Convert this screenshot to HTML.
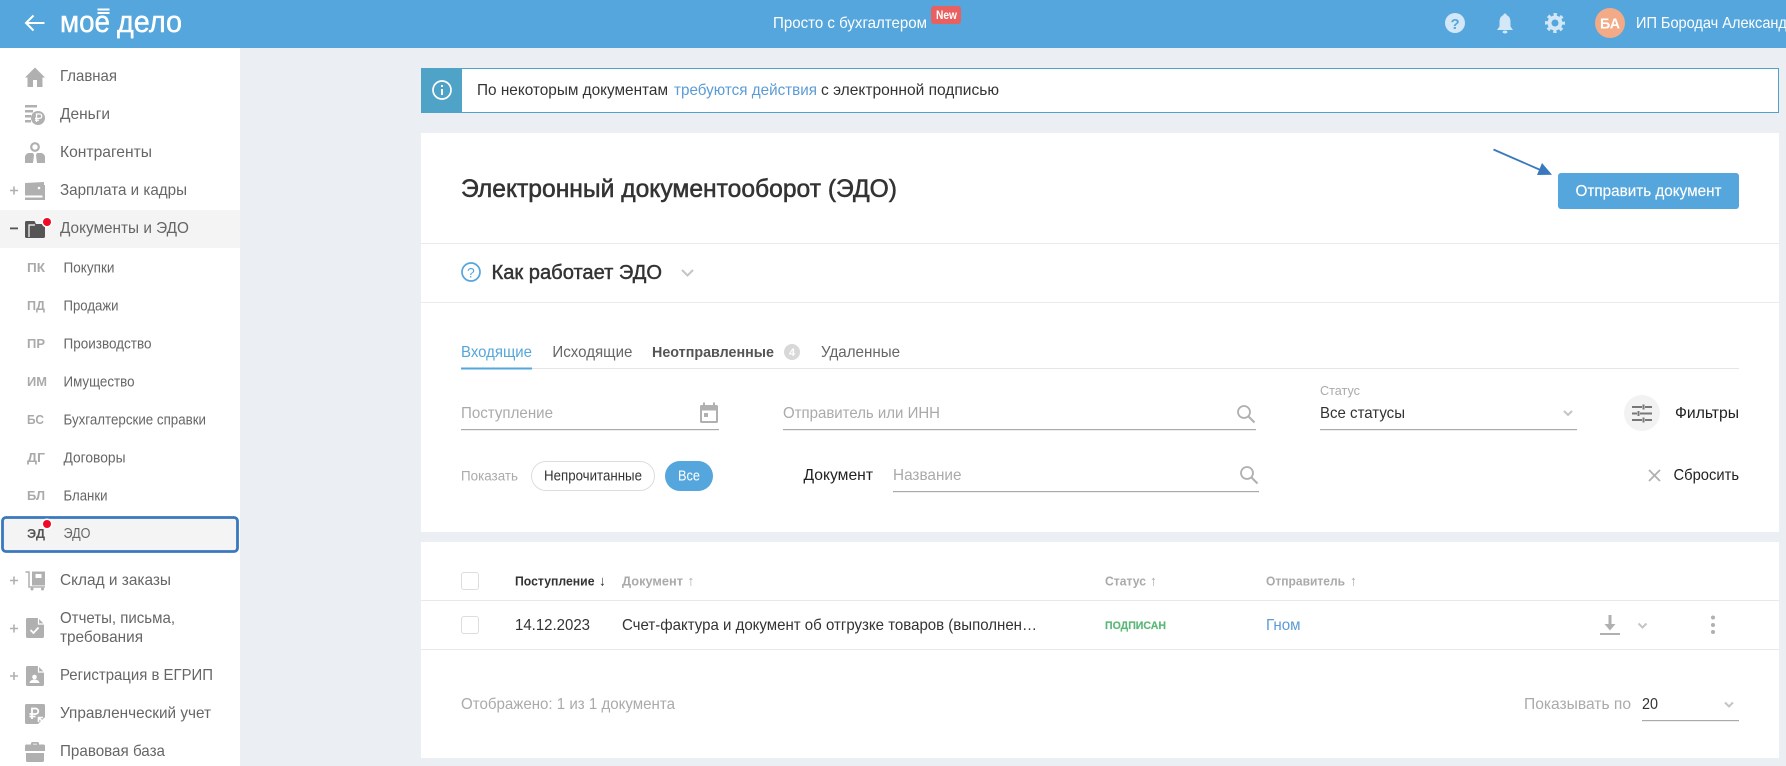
<!DOCTYPE html>
<html lang="ru">
<head>
<meta charset="utf-8">
<title>Электронный документооборот (ЭДО)</title>
<style>
html,body{margin:0;padding:0;width:1786px;height:766px;overflow:hidden;background:#ebeff3}
svg{display:block}
text{font-family:"Liberation Sans",Arial,sans-serif;white-space:pre}
.nav{font-size:16px;fill:#666}
.sub{font-size:14.5px;fill:#666}
.lab{font-size:12.5px;font-weight:700;fill:#aaa}
.t{font-size:16px;fill:#333}
.ph{font-size:16px;fill:#aaa}
.th{font-size:13px;font-weight:700;fill:#aaa}
.ar{font-size:14px;font-weight:700;fill:#aaa}
.ic{fill:#b0b0b0}
.wh{fill:#fff}
.chev{fill:none;stroke:#c4c4c4;stroke-width:2}
.ul{fill:#aaa}
.ln{fill:#e8e8e8}
</style>
</head>
<body>
<svg width="1786" height="766" viewBox="0 0 1786 766" xmlns="http://www.w3.org/2000/svg">
<rect width="1786" height="766" fill="#ebeff3"/>

<!-- top bar -->
<rect width="1786" height="48" fill="#54a6dc"/>
<path d="M44.5 23H26.5M33.5 15.500L26 23l7.500 7.500" fill="none" stroke="#fff" stroke-width="2"/>
<text x="60" y="32" font-size="31" fill="#fff" stroke="#fff" stroke-width=".45" textLength="50" lengthAdjust="spacingAndGlyphs">мое</text>
<text x="117" y="32" font-size="31" fill="#fff" stroke="#fff" stroke-width=".45" textLength="65" lengthAdjust="spacingAndGlyphs">дело</text>
<rect x="97.500" y="8.500" width="12" height="2" fill="#fff"/><rect x="97.500" y="12" width="12" height="2" fill="#fff"/>
<text x="773" y="28" font-size="16" fill="#fff" textLength="154" lengthAdjust="spacingAndGlyphs">Просто с бухгалтером</text>
<rect x="931" y="6" width="30" height="18" rx="3" fill="#e96060"/>
<text x="936" y="19" font-size="12" font-weight="700" fill="#fff" textLength="21" lengthAdjust="spacingAndGlyphs">New</text>
<circle cx="1455" cy="23" r="10" fill="#d2e7f7"/>
<text x="1450.500" y="29" font-size="15" font-weight="700" fill="#54a6dc">?</text>
<path d="M1505 13.500c-1 0-1.500.6-1.500 1.500-3.500 1.400-4 4.500-4 7.500v4l-2.500 3.500h16l-2.500-3.500v-4c0-3-.5-6.100-4-7.500 0-.9-.5-1.500-1.500-1.500z" fill="#d2e7f7"/>
<ellipse cx="1505" cy="32" rx="2.500" ry="1.500" fill="#d2e7f7"/>
<circle cx="1555" cy="23" r="5.500" fill="none" stroke="#d2e7f7" stroke-width="4"/>
<circle cx="1555" cy="23" r="8.500" fill="none" stroke="#d2e7f7" stroke-width="3" stroke-dasharray="3.340 3.340" stroke-dashoffset="1.670"/>
<circle cx="1610" cy="23" r="15" fill="#f2ab86"/>
<text x="1600" y="28.500" font-size="15" font-weight="700" fill="#fff" textLength="20" lengthAdjust="spacingAndGlyphs">БА</text>
<text x="1636" y="28" font-size="16" fill="#fff" textLength="159" lengthAdjust="spacingAndGlyphs">ИП Бородач Александр</text>

<!-- sidebar -->
<rect y="48" width="240" height="718" fill="#fff"/>
<rect y="210" width="240" height="38" fill="#f4f4f4"/>
<rect x="2.500" y="517.500" width="235" height="34" rx="3.500" fill="#f4f4f4" stroke="#3a78bd" stroke-width="2.800"/>

<text class="nav" x="60" y="81" textLength="57" lengthAdjust="spacingAndGlyphs">Главная</text>
<text class="nav" x="60" y="119" textLength="50" lengthAdjust="spacingAndGlyphs">Деньги</text>
<text class="nav" x="60" y="157" textLength="92" lengthAdjust="spacingAndGlyphs">Контрагенты</text>
<text class="nav" x="60" y="195" textLength="127" lengthAdjust="spacingAndGlyphs">Зарплата и кадры</text>
<text class="nav" x="60" y="233" textLength="129" lengthAdjust="spacingAndGlyphs">Документы и ЭДО</text>

<text class="lab" x="27" y="272" textLength="18" lengthAdjust="spacingAndGlyphs">ПК</text>
<text class="sub" x="63.500" y="272.500" textLength="51" lengthAdjust="spacingAndGlyphs">Покупки</text>
<text class="lab" x="27" y="310" textLength="18" lengthAdjust="spacingAndGlyphs">ПД</text>
<text class="sub" x="63.500" y="310.500" textLength="55" lengthAdjust="spacingAndGlyphs">Продажи</text>
<text class="lab" x="27" y="348" textLength="18" lengthAdjust="spacingAndGlyphs">ПР</text>
<text class="sub" x="63.500" y="348.500" textLength="88" lengthAdjust="spacingAndGlyphs">Производство</text>
<text class="lab" x="27" y="386" textLength="20" lengthAdjust="spacingAndGlyphs">ИМ</text>
<text class="sub" x="63.500" y="386.500" textLength="71" lengthAdjust="spacingAndGlyphs">Имущество</text>
<text class="lab" x="27" y="424" textLength="17" lengthAdjust="spacingAndGlyphs">БС</text>
<text class="sub" x="63.500" y="424.500" textLength="142.500" lengthAdjust="spacingAndGlyphs">Бухгалтерские справки</text>
<text class="lab" x="27" y="462" textLength="18" lengthAdjust="spacingAndGlyphs">ДГ</text>
<text class="sub" x="63.500" y="462.500" textLength="62" lengthAdjust="spacingAndGlyphs">Договоры</text>
<text class="lab" x="27" y="500" textLength="18" lengthAdjust="spacingAndGlyphs">БЛ</text>
<text class="sub" x="63.500" y="500.500" textLength="44" lengthAdjust="spacingAndGlyphs">Бланки</text>
<text class="lab" x="27" y="538" style="fill:#555" textLength="18" lengthAdjust="spacingAndGlyphs">ЭД</text>
<text class="sub" x="63.500" y="538" textLength="27" lengthAdjust="spacingAndGlyphs">ЭДО</text>

<text class="nav" x="60" y="585" textLength="111" lengthAdjust="spacingAndGlyphs">Склад и заказы</text>
<text class="nav" x="60" y="623" textLength="115" lengthAdjust="spacingAndGlyphs">Отчеты, письма,</text>
<text class="nav" x="60" y="642" textLength="83" lengthAdjust="spacingAndGlyphs">требования</text>
<text class="nav" x="60" y="680" textLength="153" lengthAdjust="spacingAndGlyphs">Регистрация в ЕГРИП</text>
<text class="nav" x="60" y="718" textLength="151" lengthAdjust="spacingAndGlyphs">Управленческий учет</text>
<text class="nav" x="60" y="756" textLength="105" lengthAdjust="spacingAndGlyphs">Правовая база</text>

<!-- plus / minus -->
<path d="M10 190.500h8M14 186.500v8M10 580.500h8M14 576.500v8M10 628.500h8M14 624.500v8M10 676h8M14 672v8" stroke="#b0b0b0" stroke-width="1.600" fill="none"/>
<rect x="10" y="227.500" width="8" height="1.800" fill="#555"/>

<!-- nav icons -->
<path class="ic" d="M35 67.500L25 77.500h2.500V87h5.500v-7h4v7h5.500v-9.500H45z"/>
<path class="ic" d="M25 105h12v2.500H25zM25 110h8v2.500h-8zM25 115h6v2.500h-6zM25 120h6v2.500h-6z"/>
<circle class="ic" cx="38" cy="118" r="7"/>
<path d="M36.500 122v-8h3a2.200 2.200 0 0 1 0 4.400h-4.500M35 120.200h4" fill="none" stroke="#fff" stroke-width="1.300"/>
<circle cx="35" cy="147" r="3.800" fill="none" stroke="#b0b0b0" stroke-width="2.200"/>
<path class="ic" d="M29 153h4l1 2-1 8h-8v-6c0-2 2-4 4-4zM41 153h-4l-1 2 1 8h8v-6c0-2-2-4-4-4z"/>
<path class="ic" d="M25 183l19-1v13.500H25z"/><rect x="25" y="197.500" width="20" height="2.500" class="ic"/><rect x="42.500" y="185" width="2.500" height="15" class="ic"/>
<circle cx="39" cy="188" r="1.300" fill="#fff"/>
<path fill="#555" d="M25 222.500c0-1 .6-1.500 1.500-1.500h8l1.500 3h9v12.500c0 1-.6 1.500-1.500 1.500h-17c-1 0-1.500-.5-1.500-1.500z"/>
<path d="M29 237v-12h6" fill="none" stroke="#fff" stroke-width="1.200"/>
<circle cx="47" cy="222" r="5.500" fill="#fff"/><circle cx="47" cy="222" r="4" fill="#ef0a26"/>
<circle cx="47" cy="524" r="5.500" fill="#fff"/><circle cx="47" cy="524" r="4" fill="#ef0a26"/>
<path d="M25.500 572h3.500v15h16" fill="none" stroke="#b0b0b0" stroke-width="1.500"/>
<rect x="32" y="571.500" width="13" height="14" class="ic"/><rect x="35.500" y="574" width="6" height="4" fill="#fff"/>
<circle cx="32" cy="589" r="1.500" class="ic"/><circle cx="42.500" cy="589" r="1.500" class="ic"/>
<path class="ic" d="M27.500 618h10.500l6 6v12.500c0 1-.6 1.500-1.500 1.500h-15c-1 0-1.500-.5-1.500-1.500v-17c0-1 .5-1.500 1.500-1.500z"/>
<path d="M38.500 617.500v6.500h6" fill="none" stroke="#fff" stroke-width="1.200"/>
<path d="M30.500 630l3 3 5-5.500" fill="none" stroke="#fff" stroke-width="1.800"/>
<path class="ic" d="M27.500 666h10.500l6 6v12.500c0 1-.6 1.500-1.500 1.500h-15c-1 0-1.500-.5-1.500-1.500v-17c0-1 .5-1.500 1.500-1.500z"/>
<path d="M38.500 665.500v6.500h6" fill="none" stroke="#fff" stroke-width="1.200"/>
<circle cx="34.500" cy="677" r="2.300" fill="#fff"/><path d="M29.500 683c.5-2.500 2.500-3.500 5-3.500s4.500 1 5 3.500z" fill="#fff"/>
<path class="ic" d="M26.500 704h17c1 0 1.500.5 1.500 1.500v11.500l-7 7H26.500c-1 0-1.500-.5-1.500-1.500v-17c0-1 .5-1.500 1.500-1.500z"/>
<path d="M32 719v-10.500h3.500a2.700 2.700 0 0 1 0 5.500h-6M29.500 716.500h6" fill="none" stroke="#fff" stroke-width="1.800"/>
<path d="M44.500 723.500l-6-6M38.500 722v-4.500h4.500" fill="none" stroke="#fff" stroke-width="1.600"/>
<path class="ic" d="M31 744.500v-1c0-1 .5-1.500 1.500-1.500h5c1 0 1.500.5 1.500 1.500v1h4.500c1 0 1.500.5 1.500 1.500v5H25v-5c0-1 .5-1.500 1.500-1.500zM33 744.500h4v-.8h-4z"/>
<path class="ic" d="M26 753h18v7.500c0 1-.5 1.500-1.500 1.500h-15c-1 0-1.500-.5-1.500-1.500z"/>

<!-- notice -->
<rect x="421.500" y="68.500" width="1357" height="44" fill="#fff" stroke="#4fa3c7"/>
<rect x="421" y="68" width="41" height="45" fill="#4fa3c7"/>
<circle cx="442" cy="90" r="9" fill="none" stroke="#fff" stroke-width="1.700"/>
<rect x="441" y="89" width="2" height="6" fill="#fff"/><rect x="441" y="85" width="2" height="2" fill="#fff"/>
<text x="477" y="95" font-size="16" fill="#333" textLength="191" lengthAdjust="spacingAndGlyphs">По некоторым документам</text>
<text x="674" y="95" font-size="16" fill="#5b9bd5" textLength="143" lengthAdjust="spacingAndGlyphs">требуются действия</text>
<text x="821" y="95" font-size="16" fill="#333" textLength="178" lengthAdjust="spacingAndGlyphs">с электронной подписью</text>

<!-- card 1 -->
<rect x="421" y="133" width="1358" height="399" fill="#fff"/>
<text x="461" y="197" font-size="25" fill="#333" stroke="#333" stroke-width=".55" textLength="436" lengthAdjust="spacingAndGlyphs">Электронный документооборот (ЭДО)</text>
<rect x="1558" y="173" width="181" height="36" rx="3" fill="#54a6dc"/>
<text x="1575.500" y="196" font-size="16" fill="#fff" stroke="#fff" stroke-width=".15" textLength="146" lengthAdjust="spacingAndGlyphs">Отправить документ</text>
<path d="M1493.500 149.500L1545 172" stroke="#3a78bd" stroke-width="1.800" fill="none"/>
<path d="M1552 174.800L1542 163l-5 12z" fill="#3a78bd"/>

<rect x="421" y="243" width="1358" height="1" fill="#ebebeb"/>
<rect x="421" y="302" width="1358" height="1" fill="#ebebeb"/>
<circle cx="471" cy="272" r="9" fill="none" stroke="#54a6dc" stroke-width="1.700"/>
<text x="467" y="277.500" font-size="14" fill="#54a6dc">?</text>
<text x="491.500" y="279" font-size="20" fill="#333" stroke="#333" stroke-width=".45" textLength="170.500" lengthAdjust="spacingAndGlyphs">Как работает ЭДО</text>
<path class="chev" d="M682 270l5.500 5.500 5.500-5.500"/>

<text x="461" y="357" font-size="16" fill="#54a6dc" textLength="71" lengthAdjust="spacingAndGlyphs">Входящие</text>
<text x="552.400" y="357" font-size="16" fill="#666" textLength="80" lengthAdjust="spacingAndGlyphs">Исходящие</text>
<text x="652" y="357" font-size="15" font-weight="700" fill="#555" textLength="122" lengthAdjust="spacingAndGlyphs">Неотправленные</text>
<circle cx="792" cy="352" r="8" fill="#d8d8d8"/>
<text x="789" y="356" font-size="11" font-weight="700" fill="#fff">4</text>
<text x="821" y="357" font-size="16" fill="#666" textLength="79" lengthAdjust="spacingAndGlyphs">Удаленные</text>
<rect x="461" y="368" width="1278" height="1" fill="#e5e5e5"/>
<rect x="461" y="367.500" width="71" height="2" fill="#54a6dc"/>

<text class="ph" x="461" y="418" textLength="92" lengthAdjust="spacingAndGlyphs">Поступление</text>
<rect class="ul" x="461" y="429" width="258" height="1.200"/>
<path class="ic" d="M701.500 405H703v-2.500h2V405h8v-2.500h2V405h1.500c1 0 1.500.5 1.500 1.500v15c0 1-.5 1.500-1.500 1.500h-15c-1 0-1.500-.5-1.500-1.500v-15c0-1 .5-1.500 1.500-1.500z"/>
<rect x="702" y="410.500" width="14" height="10.500" fill="#fff"/><rect x="704" y="413" width="4" height="4" class="ic"/>

<text class="ph" x="783" y="418" textLength="157" lengthAdjust="spacingAndGlyphs">Отправитель или ИНН</text>
<rect class="ul" x="783" y="429" width="473" height="1.200"/>
<circle cx="1244" cy="412" r="6" fill="none" stroke="#b0b0b0" stroke-width="1.800"/>
<path d="M1248.500 416.500l6 6" stroke="#b0b0b0" stroke-width="2" fill="none"/>

<text x="1320" y="395" font-size="13" fill="#aaa" textLength="40" lengthAdjust="spacingAndGlyphs">Статус</text>
<text class="t" x="1320" y="418" textLength="85" lengthAdjust="spacingAndGlyphs">Все статусы</text>
<rect class="ul" x="1320" y="429" width="257" height="1.200"/>
<path class="chev" d="M1564 411l4 4 4-4"/>

<circle cx="1642" cy="413" r="18" fill="#f2f2f2"/>
<path d="M1632 407h10M1645 407h7M1643.500 404.500v5M1632 413.500h5M1640 413.500h12M1638.500 411v5M1632 420h10M1645 420h7M1643.500 417.500v5" stroke="#777" stroke-width="2" fill="none"/>
<text class="t" x="1675" y="418" style="fill:#222" textLength="64" lengthAdjust="spacingAndGlyphs">Фильтры</text>

<text x="461" y="480.500" font-size="14" fill="#aaa" textLength="57" lengthAdjust="spacingAndGlyphs">Показать</text>
<rect x="531.500" y="461.500" width="123" height="29" rx="14.500" fill="#fff" stroke="#ddd"/>
<text x="544" y="480.500" font-size="14.500" fill="#333" textLength="98" lengthAdjust="spacingAndGlyphs">Непрочитанные</text>
<rect x="665" y="461" width="48" height="30" rx="15" fill="#54a6dc"/>
<text x="678" y="480.500" font-size="14.500" fill="#fff" textLength="22" lengthAdjust="spacingAndGlyphs">Все</text>
<text class="t" x="803.500" y="480" style="fill:#222" textLength="69.500" lengthAdjust="spacingAndGlyphs">Документ</text>
<text class="ph" x="893" y="480" textLength="68.500" lengthAdjust="spacingAndGlyphs">Название</text>
<rect class="ul" x="893" y="491" width="366" height="1.200"/>
<circle cx="1247" cy="473" r="6" fill="none" stroke="#b0b0b0" stroke-width="1.800"/>
<path d="M1251.500 477.500l6 6" stroke="#b0b0b0" stroke-width="2" fill="none"/>
<path d="M1649 470l11 11M1660 470l-11 11" stroke="#b0b0b0" stroke-width="1.800" fill="none"/>
<text class="t" x="1673.500" y="480" style="fill:#222" textLength="65.500" lengthAdjust="spacingAndGlyphs">Сбросить</text>

<!-- card 2 -->
<rect x="421" y="542" width="1358" height="216" fill="#fff"/>
<rect x="461.500" y="572.500" width="17" height="17" rx="2.500" fill="#fff" stroke="#ddd"/>
<text class="th" x="515" y="585.500" style="fill:#333" textLength="79.500" lengthAdjust="spacingAndGlyphs">Поступление</text>
<text class="ar" x="599" y="585.500" style="fill:#333">↓</text>
<text class="th" x="622" y="585.500" textLength="61" lengthAdjust="spacingAndGlyphs">Документ</text>
<text class="ar" x="687.500" y="585.500">↑</text>
<text class="th" x="1105" y="585.500" textLength="41" lengthAdjust="spacingAndGlyphs">Статус</text>
<text class="ar" x="1150" y="585.500">↑</text>
<text class="th" x="1266" y="585.500" textLength="79" lengthAdjust="spacingAndGlyphs">Отправитель</text>
<text class="ar" x="1350" y="585.500">↑</text>
<rect x="421" y="600" width="1358" height="1" fill="#e8e8e8"/>
<rect x="461.500" y="616.500" width="17" height="17" rx="2.500" fill="#fff" stroke="#ddd"/>
<text class="t" x="515" y="630" textLength="75" lengthAdjust="spacingAndGlyphs">14.12.2023</text>
<text class="t" x="622" y="630" textLength="415" lengthAdjust="spacingAndGlyphs">Счет-фактура и документ об отгрузке товаров (выполнен…</text>
<text x="1105" y="629" font-size="11" font-weight="700" fill="#5cb87a" stroke="#5cb87a" stroke-width=".2" textLength="61" lengthAdjust="spacingAndGlyphs">ПОДПИСАН</text>
<text x="1266" y="630" font-size="16" fill="#5b9bd5" textLength="34.500" lengthAdjust="spacingAndGlyphs">Гном</text>
<path class="ic" d="M1608.500 615h3v9h4l-5.500 6.500-5.500-6.500h4z"/>
<rect x="1600" y="633" width="20" height="2" class="ic"/>
<path class="chev" d="M1638.500 623.500l4 4 4-4"/>
<circle class="ic" cx="1713" cy="617.500" r="2"/><circle class="ic" cx="1713" cy="625" r="2"/><circle class="ic" cx="1713" cy="632" r="2"/>
<rect x="421" y="649" width="1358" height="1" fill="#e8e8e8"/>

<text class="ph" x="461" y="709" textLength="214" lengthAdjust="spacingAndGlyphs">Отображено: 1 из 1 документа</text>
<text class="ph" x="1524" y="709" textLength="107" lengthAdjust="spacingAndGlyphs">Показывать по</text>
<text class="t" x="1642" y="709" textLength="16" lengthAdjust="spacingAndGlyphs">20</text>
<rect class="ul" x="1642" y="720" width="97" height="1.200"/>
<path class="chev" d="M1725 702.500l4 4 4-4"/>
</svg>
</body>
</html>
